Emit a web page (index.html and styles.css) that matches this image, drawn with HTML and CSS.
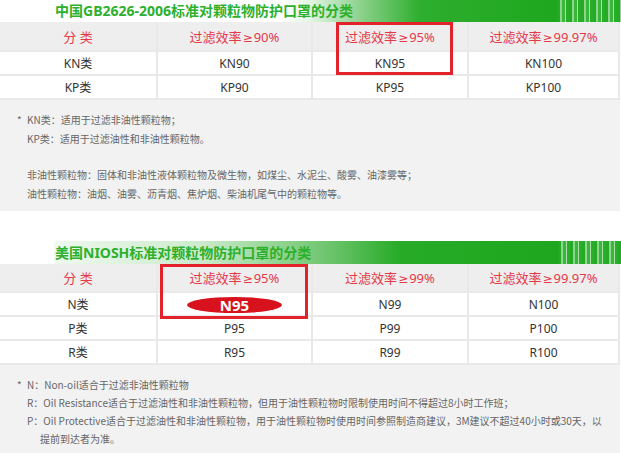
FILE: index.html
```html
<!DOCTYPE html>
<html lang="zh">
<head>
<meta charset="utf-8">
<title>口罩分类</title>
<link rel="stylesheet" href="styles.css">
</head>
<body>
<section class="sec sec1">
  <div class="title title1"><span>中国GB2626-2006标准对颗粒物防护口罩的分类</span></div>
  <div class="tbl-wrap">
    <table class="tbl">
      <tr class="head"><td>分 类</td><td>过滤效率<span class="ge">≥</span>90%</td><td>过滤效率<span class="ge">≥</span>95%</td><td>过滤效率<span class="ge">≥</span>99.97%</td></tr>
      <tr><td>KN类</td><td>KN90</td><td>KN95</td><td>KN100</td></tr>
      <tr><td>KP类</td><td>KP90</td><td>KP95</td><td>KP100</td></tr>
    </table>
    <div class="hl hl1"></div>
  </div>
  <div class="notes notes1">
    <p><span class="star">*</span>KN类：适用于过滤非油性颗粒物；</p>
    <p>KP类：适用于过滤油性和非油性颗粒物。</p>
    <p class="blank"></p>
    <p>非油性颗粒物：固体和非油性液体颗粒物及微生物，如煤尘、水泥尘、酸雾、油漆雾等；</p>
    <p>油性颗粒物：油烟、油雾、沥青烟、焦炉烟、柴油机尾气中的颗粒物等。</p>
  </div>
</section>

<section class="sec sec2">
  <div class="title title2"><span>美国NIOSH标准对颗粒物防护口罩的分类</span></div>
  <div class="tbl-wrap">
    <table class="tbl">
      <tr class="head"><td>分 类</td><td>过滤效率<span class="ge">≥</span>95%</td><td>过滤效率<span class="ge">≥</span>99%</td><td>过滤效率<span class="ge">≥</span>99.97%</td></tr>
      <tr><td>N类</td><td><span class="oval">N95</span></td><td>N99</td><td>N100</td></tr>
      <tr><td>P类</td><td>P95</td><td>P99</td><td>P100</td></tr>
      <tr><td>R类</td><td>R95</td><td>R99</td><td>R100</td></tr>
    </table>
    <div class="hl hl2"></div>
  </div>
  <div class="notes notes2">
    <p><span class="star">*</span>N：Non-oil适合于过滤非油性颗粒物</p>
    <p>R：Oil Resistance适合于过滤油性和非油性颗粒物，但用于油性颗粒物时限制使用时间不得超过8小时工作班；</p>
    <p>P：Oil Protective适合于过滤油性和非油性颗粒物，用于油性颗粒物时使用时间参照制造商建议，3M建议不超过40小时或30天，以</p>
    <p class="indent">提前到达者为准。</p>
  </div>
</section>
</body>
</html>
```

FILE: styles.css
```css
* { box-sizing: border-box; }
html, body { margin: 0; padding: 0; background: #fff; }
body {
  width: 621px;
  font-family: "Noto Sans", "Noto Sans CJK SC", sans-serif;
  color: #333;
}
.sec2 { margin-top: 30px; }

.title {
  height: 22px;
  line-height: 22px;
  padding-left: 55px;
  font-size: 14px;
  font-weight: bold;
  color: #2db02d;
  white-space: nowrap;
}
.title1 {
  background:
    repeating-linear-gradient(90deg, #25aa25 0 3px, #8fd48f 3px 5px, #3ab63a 5px 8px, #a9e0a9 8px 9px, #2aad2a 9px 12px) right top / 64px 100% no-repeat,
    linear-gradient(90deg, #fff 0, #fff 280px, #e3f4e3 310px, #8dd28d 360px, #2eae2e 420px, #1ea71e 557px);
}
.title2 {
  height: 23px;
  line-height: 24px;
  background:
    repeating-linear-gradient(90deg, #25aa25 0 3px, #8fd48f 3px 5px, #3ab63a 5px 8px, #a9e0a9 8px 9px, #2aad2a 9px 12px) right top / 63px 100% no-repeat,
    linear-gradient(90deg, transparent 0, transparent 54px, #eef8ee 55px, #cdebcd 200px, #6cc46c 330px, #27ab27 400px, #1ea71e 558px);
}

.tbl-wrap { position: relative; width: 621px; }
.tbl {
  width: 620px;
  border-collapse: collapse;
  table-layout: fixed;
  text-align: center;
}
.tbl td {
  border: 2px solid #e9e9e9;
  height: 24px;
  padding: 0;
  font-size: 12px;
  color: #333;
}
.tbl td:first-child { border-left: none; width: 157px; }
.tbl td:nth-child(2) { width: 155px; }
.tbl td:nth-child(3) { width: 156px; }
.tbl tr:first-child td { border-top: none; }
.tbl tr.head td {
  height: 29px;
  background: #eeeeee;
  color: #e5394a;
  font-size: 13px;
}
.sec2 .tbl tr.head td { height: 28px; }
.sec2 .tbl td { height: 24px; }
.ge { font-family: "DejaVu Sans", sans-serif; font-size: 12px; padding: 0 1px; }

.hl {
  position: absolute;
  border: 3px solid #e3232b;
}
.hl1 { left: 336px; top: 0; width: 117px; height: 53px; }
.hl2 { left: 160px; top: 0; width: 148px; height: 55px; }

.oval {
  display: inline-block;
  width: 95px;
  height: 16px;
  line-height: 16px;
  border-radius: 50%;
  background: #d8121c;
  color: #fff;
  font-weight: bold;
  font-size: 15px;
  vertical-align: middle;
}

.notes {
  width: 620px;
  background: #f2f2f2;
  padding: 10px 0 8px 27px;
  font-family: "Noto Sans CJK SC", sans-serif;
  font-size: 10px;
  color: #666;
}
.notes p {
  margin: 0;
  height: 19px;
  line-height: 19px;
  white-space: nowrap;
}
.notes2 { padding-top: 11px; }
.notes2 p { height: 18px; line-height: 18px; }
.notes .blank { height: 17px; }
.star {
  display: inline-block;
  width: 10px;
  margin-left: -10px;
}
.notes .indent { padding-left: 13px; }
```
